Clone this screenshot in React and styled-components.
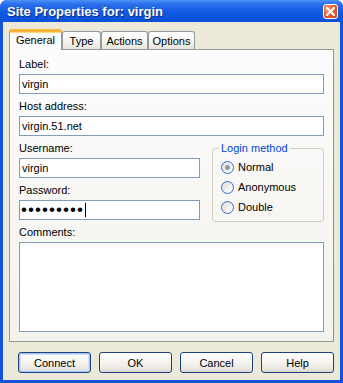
import React from "react";
import styled, { createGlobalStyle, css } from "styled-components";

const GlobalStyle = createGlobalStyle`
  html, body {
    margin: 0;
    padding: 0;
    background: #fff;
  }
  body {
    font-family: "Liberation Sans", Arial, sans-serif;
    font-size: 11px;
    color: #000;
  }
`;

const Window = styled.div`
  width: 343px;
  height: 383px;
  box-sizing: border-box;
  display: flex;
  flex-direction: column;
  background: #1553d8;
  border-radius: 7px 7px 0 0;
  padding: 0 3px 3px;
  overflow: hidden;
`;

const TitleBar = styled.div`
  height: 22px;
  flex: none;
  margin: 0 -3px;
  padding: 0 5px 0 7px;
  display: flex;
  align-items: center;
  justify-content: space-between;
  background: linear-gradient(#4a92fa 0%, #2a6eea 20%, #115ae2 55%, #0b50d8 100%);
`;

const Title = styled.span`
  font: bold 13px "Liberation Sans", Arial, sans-serif;
  color: #fff;
  text-shadow: 1px 1px #0b2a8a;
`;

const CloseButton = styled.div`
  width: 15px;
  height: 15px;
  box-sizing: border-box;
  border: 1px solid #fff;
  border-radius: 3px;
  background: radial-gradient(circle at 30% 30%, #f49a72, #e2532a 60%, #c8401c);
  display: flex;
  align-items: center;
  justify-content: center;
`;

const Client = styled.div`
  flex: 1;
  background: #ece9d8;
  display: flex;
  flex-direction: column;
  padding: 7px 6px 7px 6px;
`;

const TabRow = styled.div`
  display: flex;
  align-items: flex-end;
  height: 20px;
  flex: none;
`;

const Tab = styled.div`
  width: ${(p) => p.$w}px;
  height: 18px;
  box-sizing: border-box;
  border: 1px solid #919b9c;
  border-bottom: none;
  border-radius: 3px 3px 0 0;
  background: linear-gradient(#ffffff, #f4f3ee 60%, #e6e4dc);
  display: flex;
  align-items: center;
  justify-content: center;
  padding-top: 1px;

  ${(p) =>
    p.$active &&
    css`
      height: 21px;
      margin-bottom: -1px;
      position: relative;
      z-index: 1;
      background: #fcfcfe;
      border-top: 3px solid #f8b33a;
      box-shadow: inset 0 1px #ffd778;
      padding-top: 0;
      padding-bottom: 2px;
    `}
`;

const Panel = styled.div`
  height: 293px;
  flex: none;
  box-sizing: border-box;
  border: 1px solid #919b9c;
  border-right-color: #8a9394;
  background: linear-gradient(#fcfcfe, #f7f6f2 60%, #f3f2ec);
  padding: 7px 9px 9px;
  display: flex;
  flex-direction: column;
`;

const Field = styled.div`
  display: flex;
  flex-direction: column;
  margin-bottom: 5px;

  ${(p) =>
    p.$grow &&
    css`
      flex: 1;
      margin-bottom: 0;
    `}
`;

const Label = styled.div`
  line-height: 14px;
  height: 14px;
  margin-bottom: 3px;
  white-space: nowrap;
`;

const TextBox = styled.div`
  height: 20px;
  box-sizing: border-box;
  border: 1px solid #7f9db9;
  background: #fff;
  padding: 0 2px;
  line-height: 18px;
  white-space: nowrap;
  display: flex;
  align-items: center;
`;

const TextArea = styled.div`
  flex: 1;
  border: 1px solid #7f9db9;
  background: #fff;
`;

const Dots = styled.span`
  font: 17px "Liberation Sans", Arial, sans-serif;
  letter-spacing: 1.05px;
  line-height: 18px;
  margin-left: -1px;
`;

const Caret = styled.span`
  width: 1px;
  height: 14px;
  background: #000;
  margin-left: 1px;
`;

const Split = styled.div`
  display: grid;
  grid-template-columns: 181px 1fr;
  column-gap: 12px;
  margin-bottom: 5px;
`;

const Column = styled.div`
  display: flex;
  flex-direction: column;

  & > ${Field}:last-child {
    margin-bottom: 0;
  }
`;

const GroupBox = styled.fieldset`
  margin: 0 0 -2px 0;
  height: 81px;
  box-sizing: border-box;
  align-self: start;
  min-width: 0;
  border: 1px solid #d0d0bf;
  border-radius: 3px;
  padding: 2px 0 0 8px;
`;

const Legend = styled.legend`
  color: #0046d5;
  line-height: 14px;
  padding: 0 2px;
  margin-left: -2px;
`;

const RadioRow = styled.div`
  height: 20px;
  display: flex;
  align-items: center;
  gap: 4px;
`;

const RadioCircle = styled.span`
  width: 13px;
  height: 13px;
  box-sizing: border-box;
  border-radius: 50%;
  border: 1px solid #3a68c4;
  background: linear-gradient(135deg, #dcdbd4, #f4f4f0 60%, #ffffff);
  display: flex;
  align-items: center;
  justify-content: center;

  &::after {
    content: "";
    width: 5px;
    height: 5px;
    border-radius: 50%;
    background: ${(p) => (p.$checked ? "#8e9ba6" : "transparent")};
  }
`;

const ButtonRow = styled.div`
  margin-top: 10px;
  display: flex;
  justify-content: flex-end;
  gap: 8px;
`;

const Button = styled.div`
  width: 73px;
  height: 21px;
  box-sizing: border-box;
  border: 1px solid #1c3f86;
  border-radius: 3px;
  background: linear-gradient(#ffffff, #f5f4f0 50%, #e8e6dd 85%, #d8d3c8);
  display: flex;
  align-items: center;
  justify-content: center;

  ${(p) =>
    p.$default &&
    css`
      box-shadow: inset 0 0 0 1px #a9c4ee, inset 0 0 0 2px #cfe0f8;
    `}
`;

const fields = [
  { label: "Label:", value: "virgin" },
  { label: "Host address:", value: "virgin.51.net" },
];

const tabs = [
  { name: "General", w: 53, active: true },
  { name: "Type", w: 39 },
  { name: "Actions", w: 47 },
  { name: "Options", w: 47 },
];

const methods = ["Normal", "Anonymous", "Double"];

export default function App() {
  return (
    <>
      <GlobalStyle />
      <Window>
        <TitleBar>
          <Title>Site Properties for: virgin</Title>
          <CloseButton>
            <svg width="9" height="9" viewBox="0 0 9 9">
              <path d="M1 1 L8 8 M8 1 L1 8" stroke="#fff" strokeWidth="2" strokeLinecap="square" />
            </svg>
          </CloseButton>
        </TitleBar>
        <Client>
          <TabRow>
            {tabs.map((t) => (
              <Tab key={t.name} $w={t.w} $active={t.active}>
                {t.name}
              </Tab>
            ))}
          </TabRow>
          <Panel>
            {fields.map((f) => (
              <Field key={f.label}>
                <Label>{f.label}</Label>
                <TextBox>{f.value}</TextBox>
              </Field>
            ))}
            <Split>
              <Column>
                <Field>
                  <Label>Username:</Label>
                  <TextBox>virgin</TextBox>
                </Field>
                <Field>
                  <Label>Password:</Label>
                  <TextBox>
                    <Dots>•••••••••</Dots>
                    <Caret />
                  </TextBox>
                </Field>
              </Column>
              <GroupBox>
                <Legend>Login method</Legend>
                {methods.map((m, i) => (
                  <RadioRow key={m}>
                    <RadioCircle $checked={i === 0} />
                    {m}
                  </RadioRow>
                ))}
              </GroupBox>
            </Split>
            <Field $grow>
              <Label>Comments:</Label>
              <TextArea />
            </Field>
          </Panel>
          <ButtonRow>
            <Button $default>Connect</Button>
            <Button>OK</Button>
            <Button>Cancel</Button>
            <Button>Help</Button>
          </ButtonRow>
        </Client>
      </Window>
    </>
  );
}
